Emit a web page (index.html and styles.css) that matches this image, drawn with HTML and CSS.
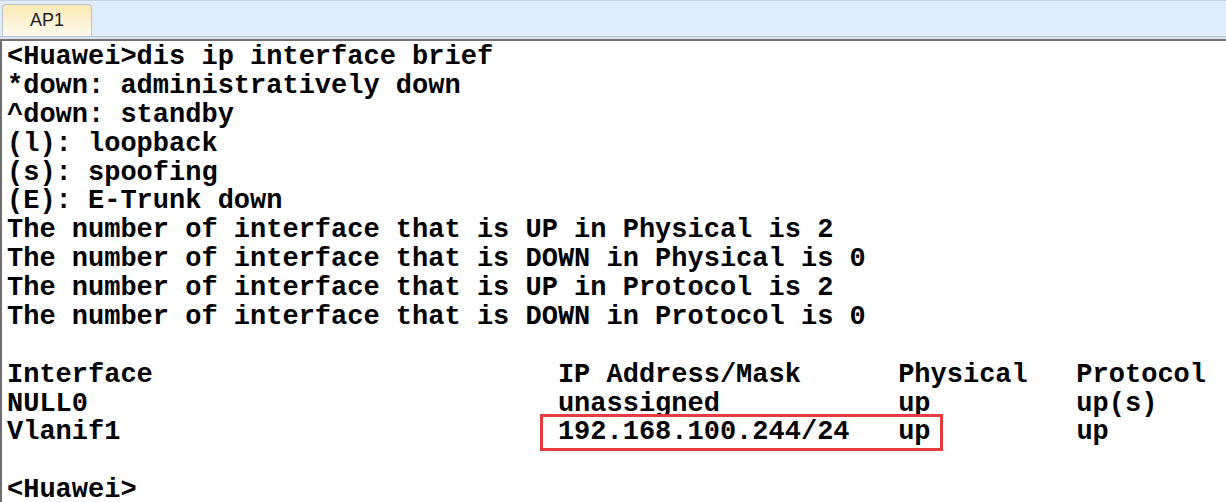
FILE: index.html
```html
<!DOCTYPE html>
<html>
<head>
<meta charset="utf-8">
<link rel="stylesheet" href="styles.css">
</head>
<body>
<div class="window">
  <div class="tabbar">
    <div class="tab">AP1</div>
  </div>
  <div class="tabline"></div>
  <pre class="console">&lt;Huawei&gt;dis ip interface brief
*down: administratively down
^down: standby
(l): loopback
(s): spoofing
(E): E-Trunk down
The number of interface that is UP in Physical is 2
The number of interface that is DOWN in Physical is 0
The number of interface that is UP in Protocol is 2
The number of interface that is DOWN in Protocol is 0

Interface                         IP Address/Mask      Physical   Protocol
NULL0                             unassigned           up         up(s)
Vlanif1                           <span class="mark">192.168.100.244/24   up</span>         up

&lt;Huawei&gt;</pre>
</div>
</body>
</html>
```

FILE: styles.css
```css
html, body {
  margin: 0;
  padding: 0;
  background: #ffffff;
  overflow: hidden;
}

.window {
  width: 1226px;
  height: 502px;
  display: flex;
  flex-direction: column;
  overflow: hidden;
}

.tabbar {
  flex-shrink: 0;
  height: 35px;
  background: #e0ecf9;
  border-top: 1px solid #c6d3e1;
  border-bottom: 1px solid #b7c4d3;
  display: flex;
  align-items: flex-end;
  padding-left: 2px;
}

.tab {
  width: 90px;
  height: 33px;
  margin-bottom: -1px;
  border: 1px solid #b9c4d0;
  border-bottom: 1px solid #b7c4d3;
  border-radius: 4px 4px 0 0;
  background: linear-gradient(#fbeab4 0%, #fcf1cf 45%, #fdf9ec 100%);
  font-family: "Liberation Sans", Arial, sans-serif;
  font-size: 18px;
  color: #1e1e1e;
  display: flex;
  align-items: center;
  justify-content: center;
  box-sizing: border-box;
}

.tabline {
  flex-shrink: 0;
  height: 2px;
  background: #dbe4ee;
  border-bottom: 2px solid #727272;
}

.console {
  flex: 1 1 auto;
  min-height: 0;
  overflow: hidden;
  margin: 0;
  padding: 2px 0 0 5px;
  border-left: 2px solid #6e6e6e;
  font-family: "Liberation Mono", "Courier New", monospace;
  font-weight: bold;
  font-size: 27px;
  line-height: 28.87px;
  color: #000000;
  white-space: pre;
}

.mark {
  border: 3px solid #e63b3f;
  padding: 0 9px 1px 15px;
  margin: 0 -12px 0 -18px;
}
```
